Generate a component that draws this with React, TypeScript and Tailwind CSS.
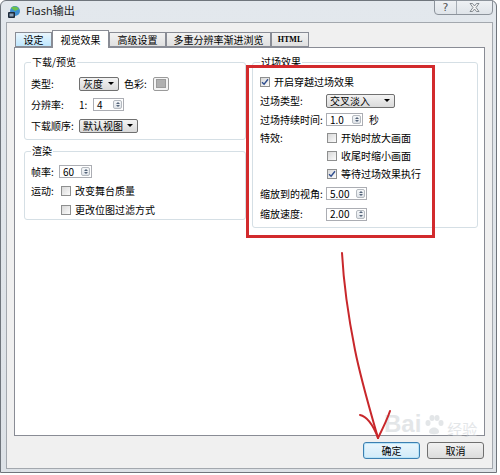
import type { ReactNode } from 'react';

const cjk = "font-['Noto_Sans_CJK_SC','Noto_Sans',sans-serif]";

function Combo({ text, className }: { text: string; className: string }) {
  return (
    <div
      className={`h-[14px] flex items-center justify-between pl-[3px] pr-[4px] rounded-[2px] border border-[#707070] bg-linear-to-b from-[#f3f3f3] to-[#dadada] ${className}`}
    >
      <span className="leading-none">{text}</span>
      <span className="w-0 h-0 border-x-[3px] border-t-[3px] border-x-transparent border-t-black" />
    </div>
  );
}

function Spin({ value, className }: { value: string; className: string }) {
  return (
    <div className={`h-[13px] flex items-stretch border border-[#abadb3] bg-white ${className}`}>
      <span className="flex-1 pl-[3px] flex items-center leading-none">{value}</span>
      <span className="w-[9px] my-[1px] mr-[1px] flex flex-col rounded-[2px] border border-[#b5bac0] bg-linear-to-b from-[#f5f7f9] to-[#dfe3e8]">
        <span className="flex-1 flex items-center justify-center">
          <span className="w-0 h-0 border-x-[2px] border-b-[2px] border-x-transparent border-b-[#55657a]" />
        </span>
        <span className="flex-1 flex items-center justify-center">
          <span className="w-0 h-0 border-x-[2px] border-t-[2px] border-x-transparent border-t-[#55657a]" />
        </span>
      </span>
    </div>
  );
}

function Check({ checked = false }: { checked?: boolean }) {
  return (
    <span className="w-[10px] h-[10px] shrink-0 flex items-center justify-center border border-[#8e8f8f] bg-linear-to-br from-[#d8d8d8] to-[#fbfbfb]">
      {checked && (
        <svg width="8" height="8" viewBox="0 0 8 8">
          <path d="M1 4.2 L3.1 6.3 L7 1.3" fill="none" stroke="#2f4e8f" strokeWidth="1.4" />
        </svg>
      )}
    </span>
  );
}

function Row({ h, label, lw, children }: { h: string; label?: string; lw: string; children: ReactNode }) {
  return (
    <div className={`flex items-center ${h}`}>
      <span className={`shrink-0 leading-none ${lw}`}>{label}</span>
      {children}
    </div>
  );
}

function Group({ title, className, children }: { title: string; className: string; children: ReactNode }) {
  return (
    <fieldset className={`border border-[#d5dfe5] rounded-[3px] ${className}`}>
      <legend className="px-[1px] leading-[12px]">{title}</legend>
      {children}
    </fieldset>
  );
}

export default function App() {
  const tabs = [
    { name: '设定', w: 'w-[37px]', hover: true },
    { name: '视觉效果', w: 'w-[57px]', active: true },
    { name: '高级设置', w: 'w-[57px]' },
    { name: '多重分辨率渐进浏览', w: 'w-[105px]' },
    { name: 'HTML', w: 'w-[38px]' },
  ];

  return (
    <div className={`relative w-[500px] h-[475px] overflow-hidden bg-white text-black ${cjk}`}>
      <div className="w-[497px] h-[473px] flex flex-col border border-[#6f757c] rounded-t-[6px] bg-linear-to-b from-[#e3e8ed] to-[#dde2e7]">
        {/* title bar */}
        <div className="h-[21px] flex items-start justify-between pl-[6px] pr-[3px]">
          <div className="flex items-center gap-[5px] h-[21px]">
            <svg width="14" height="14" viewBox="0 0 14 14">
              <circle cx="8" cy="6" r="5" fill="#3f8fd0" />
              <path d="M4 3 C6 1 10 1 12 4 L8 6 Z" fill="#6cc04a" />
              <rect x="1" y="7" width="7" height="6" rx="1" fill="#1d2a3a" />
              <rect x="2.5" y="8.5" width="4" height="3" fill="#8aa0b8" />
            </svg>
            <span className="text-[11px] text-[#1e1e1e] font-['Noto_Sans','Noto_Sans_CJK_SC',sans-serif]">Flash输出</span>
          </div>
          <div className="flex h-[15px] mt-[-1px] border border-[#8c939b] rounded-b-[4px] bg-linear-to-b from-[#eef1f4] to-[#dfe4e9]">
            <span className="w-[22px] flex items-center justify-center text-[11px] leading-none text-[#555] border-r border-[#a6adb5] font-['DejaVu_Sans',sans-serif]">?</span>
            <span className="w-[35px] flex items-center justify-center">
              <svg width="11" height="9" viewBox="0 0 11 9">
                <path d="M1 0.5 L3.5 0.5 L5.5 3 L7.5 0.5 L10 0.5 L7 4.5 L10 8.5 L7.5 8.5 L5.5 6 L3.5 8.5 L1 8.5 L4 4.5 Z" fill="#f3f3f3" stroke="#6c737b" strokeWidth="0.8" />
              </svg>
            </span>
          </div>
        </div>

        {/* client area */}
        <div className="ml-[5px] w-[487px] h-[447px] flex flex-col border border-[#a3a8ae] bg-[#f0f0f0]">
          {/* tabs */}
          <div className="relative z-10 flex items-end h-[18px] mt-[7px] pl-[8px] text-[10px] leading-none">
            {tabs.map((t) =>
              t.active ? (
                <div key={t.name} className={`${t.w} h-[18px] flex items-center justify-center border border-b-0 border-[#898c95] bg-white`}>
                  {t.name}
                </div>
              ) : (
                <div
                  key={t.name}
                  className={`${t.w} h-[15px] mb-[1px] flex items-center justify-center border border-[#898c95] ${
                    t.hover ? 'bg-linear-to-b from-[#eaf6fd] to-[#bee6fd] border-[#3c7fb1]' : 'bg-linear-to-b from-[#f2f2f2] to-[#e0e0e0]'
                  } ${t.name === 'HTML' ? "text-[8px] font-bold font-['Liberation_Serif',serif]" : ''}`}
                >
                  {t.name}
                </div>
              )
            )}
          </div>

          {/* tab panel */}
          <div className="mt-[-1px] ml-[7px] w-[471px] h-[389px] border border-[#898c95] bg-white text-[10px]">
            <div className="flex gap-[6px] pl-[9px] pt-[8px]">
              <div className="flex flex-col w-[222px]">
                <Group title="下载/预览" className="pl-[6px] pt-[5px] pb-[3px]">
                  <Row h="h-[21px]" lw="w-[48px]" label="类型:">
                    <Combo text="灰度" className="w-[40px]" />
                    <span className="ml-[5px] leading-none">色彩:</span>
                    <span className="ml-[6px] w-[16px] h-[14px] flex items-center justify-center border border-[#9a9a9a] rounded-[2px] bg-[#f4f4f4]">
                      <span className="w-[10px] h-[9px] bg-[#b0b0b0] border border-[#9c9c9c]" />
                    </span>
                  </Row>
                  <Row h="h-[21px]" lw="w-[48px]" label="分辨率:">
                    <span className="leading-none w-[14px]">1:</span>
                    <Spin value="4" className="w-[31px]" />
                  </Row>
                  <Row h="h-[21px]" lw="w-[48px]" label="下载顺序:">
                    <Combo text="默认视图" className="w-[59px]" />
                  </Row>
                </Group>
                <Group title="渲染" className="mt-[5px] pl-[6px] pt-[5px] pb-0">
                  <Row h="h-[19px]" lw="w-[28px]" label="帧率:">
                    <Spin value="60" className="w-[33px]" />
                  </Row>
                  <Row h="h-[19px]" lw="w-[28px]" label="运动:">
                    <span className="ml-[2px]"><Check /></span>
                    <span className="ml-[4px] leading-none">改变舞台质量</span>
                  </Row>
                  <Row h="h-[19px]" lw="w-[28px]">
                    <span className="ml-[2px]"><Check /></span>
                    <span className="ml-[4px] leading-none">更改位图过滤方式</span>
                  </Row>
                </Group>
              </div>

              <Group title="过场效果" className="w-[226px] h-[172px] pl-[7px] pt-[4px]">
                <div className="flex items-center h-[19px]">
                  <Check checked />
                  <span className="ml-[4px] leading-none">开启穿越过场效果</span>
                </div>
                <Row h="h-[19px]" lw="w-[66px]" label="过场类型:">
                  <Combo text="交叉淡入" className="w-[69px]" />
                </Row>
                <Row h="h-[19px]" lw="w-[66px]" label="过场持续时间:">
                  <Spin value="1.0" className="w-[37px]" />
                  <span className="ml-[6px] leading-none">秒</span>
                </Row>
                <Row h="h-[18px]" lw="w-[66px]" label="特效:">
                  <span className="ml-[1px]"><Check /></span>
                  <span className="ml-[4px] leading-none">开始时放大画面</span>
                </Row>
                <Row h="h-[18px]" lw="w-[66px]">
                  <span className="ml-[1px]"><Check /></span>
                  <span className="ml-[4px] leading-none">收尾时缩小画面</span>
                </Row>
                <Row h="h-[18px]" lw="w-[66px]">
                  <span className="ml-[1px]"><Check checked /></span>
                  <span className="ml-[4px] leading-none">等待过场效果执行</span>
                </Row>
                <Row h="h-[21px]" lw="w-[66px]" label="缩放到的视角:">
                  <Spin value="5.00" className="w-[41px]" />
                </Row>
                <Row h="h-[20px]" lw="w-[66px]" label="缩放速度:">
                  <Spin value="2.00" className="w-[41px]" />
                </Row>
              </Group>
            </div>
          </div>

          {/* buttons */}
          <div className="flex justify-end gap-[7px] pt-[6px] pr-[8px] text-[10px]">
            <button className="w-[57px] h-[17px] flex items-center justify-center rounded-[3px] border border-[#3c7fb1] bg-linear-to-b from-[#eaf6fd] to-[#d2ebf9] leading-none shadow-[inset_0_0_0_1px_#b9e4f8]">
              确定
            </button>
            <button className="w-[57px] h-[17px] flex items-center justify-center rounded-[3px] border border-[#707070] bg-linear-to-b from-[#f2f2f2] to-[#dcdcdc] leading-none">
              取消
            </button>
          </div>
        </div>
      </div>

      {/* watermark */}
      <div className="absolute left-[384px] top-[412px] flex items-end gap-[2px] opacity-50 pointer-events-none">
        <span className="text-[24px] leading-none font-bold text-[#c9ced3] font-['Liberation_Sans',sans-serif]">Bai</span>
        <svg width="22" height="22" viewBox="0 0 22 22">
          <g fill="#c9ced3">
            <ellipse cx="5" cy="9" rx="2.5" ry="3" />
            <ellipse cx="9" cy="4" rx="2.5" ry="3" />
            <ellipse cx="14" cy="4" rx="2.5" ry="3" />
            <ellipse cx="18" cy="9" rx="2.5" ry="3" />
            <path d="M6 18 C6 12 16 12 16 18 C16 21 6 21 6 18 Z" />
          </g>
        </svg>
        <span className="text-[15px] leading-none text-[#c9ced3]">经验</span>
      </div>

      {/* red annotation box */}
      <div className="absolute left-[246px] top-[65px] w-[189px] h-[173px] border-[3px] border-[#d22a2d] pointer-events-none" />

      {/* red arrow */}
      <svg className="absolute left-0 top-0 pointer-events-none" width="500" height="475" viewBox="0 0 500 475">
        <g fill="none" stroke="#c8272b" strokeWidth="2" strokeLinecap="round">
          <path d="M342 253 C344 290 349 320 355 350 C361 380 370 410 378 438" />
          <path d="M360 415 C366 416 373 424 378 438" />
          <path d="M390 411 C387 420 382 430 378 438" />
        </g>
      </svg>
    </div>
  );
}
